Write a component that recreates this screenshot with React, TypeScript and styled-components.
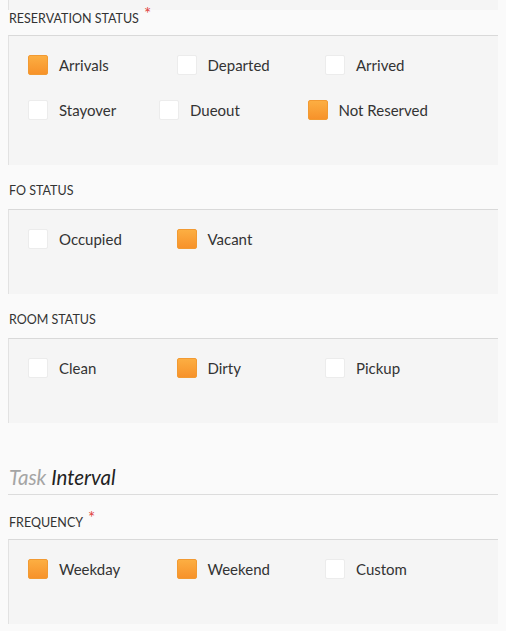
import * as React from 'react';
import styled, { createGlobalStyle } from 'styled-components';

const GlobalStyle = createGlobalStyle`
	html, body {
		margin: 0;
		padding: 0;
		background: #fafafa;
	}
	body {
		font-family: Lato, 'Open Sans', Arial, sans-serif;
		color: #333;
	}
`;

const Page = styled.div`
	width: 490px;
	padding-left: 8px;
	overflow: hidden;
	height: 631px;
`;

const Panel = styled.div<{ $stub?: boolean }>`
	background: #f5f5f5;
	border-left: 1px solid #e2e2e2;
	border-top: ${(p) => (p.$stub ? 'none' : '1px solid #d9d9d9')};
	height: ${(p) => (p.$stub ? '10px' : 'auto')};
	padding: ${(p) => (p.$stub ? '0' : '19px 19px 45px')};
	display: flex;
	flex-direction: column;
	gap: 25px;
`;

const FieldLabel = styled.div<{ $top: number }>`
	margin-top: ${(p) => p.$top}px;
	margin-bottom: 14px;
	padding-left: 1px;
	font-size: 12.5px;
	line-height: 8px;
	height: 8px;
	text-transform: uppercase;
	color: #333;
`;

const Required = styled.span`
	color: #e0443e;
	font-size: 17px;
	margin-left: 5px;
	position: relative;
	top: -3px;
`;

const Row = styled.div`
	display: flex;
	align-items: center;
	height: 20px;
`;

const Item = styled.label<{ $width?: number }>`
	display: flex;
	align-items: center;
	width: ${(p) => p.$width ?? 148.5}px;
	flex: none;
	font-size: 15px;
	color: #333;
`;

const Box = styled.span<{ $checked: boolean }>`
	width: 20px;
	height: 20px;
	box-sizing: border-box;
	border-radius: 2px;
	margin-right: 11px;
	flex: none;
	background: ${(p) =>
		p.$checked ? 'linear-gradient(to bottom, #fcae42, #f7922a)' : '#ffffff'};
	border: 1px solid ${(p) => (p.$checked ? '#f29a32' : '#ececec')};
`;

const Heading = styled.h2`
	margin: 42px 0 0;
	padding: 0 0 5px 1px;
	font-size: 20.5px;
	line-height: 24px;
	font-weight: 400;
	font-style: italic;
	color: #222;
	border-bottom: 1px solid #dcdcdc;
`;

const Muted = styled.span`
	color: #a5a5a5;
`;

type Opt = { label: string; checked: boolean; width?: number };

const Check: React.FunctionComponent<Opt> = ({ label, checked, width }) => (
	<Item $width={width}>
		<Box $checked={checked} />
		{label}
	</Item>
);

const Group: React.FunctionComponent<{
	title: string;
	required?: boolean;
	top: number;
	rows: Opt[][];
}> = ({ title, required, top, rows }) => (
	<>
		<FieldLabel $top={top}>
			{title}
			{required && <Required>*</Required>}
		</FieldLabel>
		<Panel>
			{rows.map((row, i) => (
				<Row key={`row${i}`}>
					{row.map((o) => (
						<Check key={o.label} {...o} />
					))}
				</Row>
			))}
		</Panel>
	</>
);

export default function App() {
	return (
		<Page>
			<GlobalStyle />
			<Panel $stub />
			<Group
				title="Reservation Status"
				required
				top={3}
				rows={[
					[
						{ label: 'Arrivals', checked: true },
						{ label: 'Departed', checked: false },
						{ label: 'Arrived', checked: false },
					],
					[
						{ label: 'Stayover', checked: false, width: 131 },
						{ label: 'Dueout', checked: false },
						{ label: 'Not Reserved', checked: true },
					],
				]}
			/>
			<Group
				title="FO Status"
				top={22}
				rows={[
					[
						{ label: 'Occupied', checked: false },
						{ label: 'Vacant', checked: true },
					],
				]}
			/>
			<Group
				title="Room Status"
				top={22}
				rows={[
					[
						{ label: 'Clean', checked: false },
						{ label: 'Dirty', checked: true },
						{ label: 'Pickup', checked: false },
					],
				]}
			/>
			<Heading>
				<Muted>Task</Muted> Interval
			</Heading>
			<Group
				title="Frequency"
				required
				top={22}
				rows={[
					[
						{ label: 'Weekday', checked: true },
						{ label: 'Weekend', checked: true },
						{ label: 'Custom', checked: false },
					],
				]}
			/>
		</Page>
	);
}
